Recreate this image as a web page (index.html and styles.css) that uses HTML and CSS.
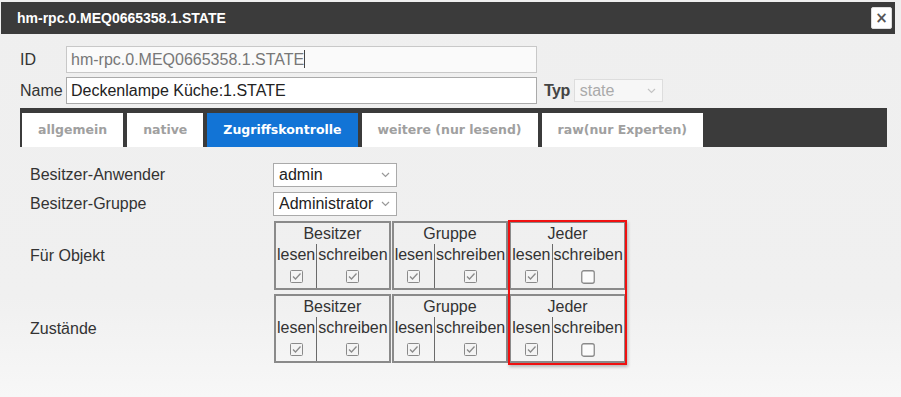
FILE: index.html
```html
<!DOCTYPE html>
<html lang="de">
<head>
    <meta charset="UTF-8">
    <meta name="viewport" content="width=device-width, initial-scale=1.0">
    <title>hm-rpc.0.MEQ0665358.1.STATE</title>
    <link rel="stylesheet" href="styles.css">
</head>
<body>
<div class="dialog">
    <div class="titlebar">
        <span class="title">hm-rpc.0.MEQ0665358.1.STATE</span>
        <button class="close">&times;</button>
    </div>

    <div class="body">
        <div class="field-row">
            <label class="field-label">ID</label>
            <div class="input readonly">hm-rpc.0.MEQ0665358.1.STATE<span class="caret"></span></div>
        </div>
        <div class="field-row">
            <label class="field-label">Name</label>
            <div class="input">Deckenlampe Küche:1.STATE</div>
            <label class="typ-label">Typ</label>
            <div class="select disabled typ">
                <span>state</span>
                <svg width="9" height="6" viewBox="0 0 9 6"><polyline points="1,1 4.5,4.5 8,1" fill="none" stroke="#c4c4c4" stroke-width="1.2"/></svg>
            </div>
        </div>

        <div class="tabs">
            <div class="tab">allgemein</div>
            <div class="tab">native</div>
            <div class="tab active">Zugriffskontrolle</div>
            <div class="tab">weitere (nur lesend)</div>
            <div class="tab">raw(nur Experten)</div>
        </div>

        <div class="settings">
            <div class="setting-row">
                <span class="setting-label">Besitzer-Anwender</span>
                <div class="select owner">
                    <span>admin</span>
                    <svg width="9" height="6" viewBox="0 0 9 6"><polyline points="1,1 4.5,4.5 8,1" fill="none" stroke="#999" stroke-width="1.2"/></svg>
                </div>
            </div>
            <div class="setting-row">
                <span class="setting-label">Besitzer-Gruppe</span>
                <div class="select owner">
                    <span>Administrator</span>
                    <svg width="9" height="6" viewBox="0 0 9 6"><polyline points="1,1 4.5,4.5 8,1" fill="none" stroke="#999" stroke-width="1.2"/></svg>
                </div>
            </div>

            <div class="perm" id="perm"></div>
        </div>
    </div>
</div>

<script>
    const rows = [
        { label: "Für Objekt", values: [true, true, true, true, true, false] },
        { label: "Zustände", values: [true, true, true, true, true, false] }
    ];
    const groups = ["Besitzer", "Gruppe", "Jeder"];

    const checked = '<svg width="13" height="13" viewBox="0 0 13 13"><rect x="0.5" y="0.5" width="12" height="12" rx="1" fill="#f4f4f4" stroke="#8a8a8a"/><polyline points="3,6.5 5.5,9 10.5,3.5" fill="none" stroke="#8a8a8a" stroke-width="1.3"/></svg>';
    const unchecked = '<svg width="14" height="14" viewBox="0 0 14 14"><rect x="0.75" y="0.75" width="12.5" height="12.5" rx="2" fill="#fbfbfb" stroke="#8a8a8a" stroke-width="1.3"/></svg>';

    function buildPerm() {
        const perm = document.getElementById("perm");
        let html = "";
        rows.forEach((row, r) => {
            html += `<div class="row-label" style="grid-row:${r + 1}">${row.label}</div>`;
            groups.forEach((group, g) => {
                const lesen = row.values[g * 2] ? checked : unchecked;
                const schreiben = row.values[g * 2 + 1] ? checked : unchecked;
                html += `<div class="group" style="grid-row:${r + 1};grid-column:${g + 2}">
                    <div class="group-head">${group}</div>
                    <div class="group-cols">
                        <div class="col lesen"><span>lesen</span>${lesen}</div>
                        <div class="col schreiben"><span>schreiben</span>${schreiben}</div>
                    </div>
                </div>`;
            });
        });
        html += '<div class="highlight"></div>';
        perm.innerHTML = html;
    }

    buildPerm();
</script>
</body>
</html>
```

FILE: styles.css
```css
body {
    margin: 0;
    font-family: "Liberation Sans", Arial, sans-serif;
    color: #333;
    background: linear-gradient(to bottom, #efefef 0%, #f0f0f0 75%, #f7f7f7 100%);
    height: 397px;
    overflow: hidden;
}

.dialog {
    padding-top: 2px;
}

.titlebar {
    display: flex;
    align-items: center;
    justify-content: space-between;
    height: 32px;
    margin: 0 6px 0 1px;
    padding: 0 3px 0 16px;
    background: #3b3b3b;
}

.title {
    color: #fff;
    font-weight: bold;
    font-size: 14px;
}

.close {
    width: 21px;
    height: 22px;
    padding: 0;
    border: 1px solid #ddd;
    border-radius: 2px;
    background: #fff;
    color: #555;
    font-family: "DejaVu Sans", sans-serif;
    font-size: 15px;
    font-weight: bold;
    line-height: 18px;
}

.body {
    padding: 12px 14px 0 20px;
}

.field-row {
    display: flex;
    align-items: center;
    margin-bottom: 4px;
    font-size: 16px;
}

.field-label {
    width: 46px;
}

.input {
    box-sizing: border-box;
    width: 471px;
    height: 27px;
    padding: 0 4px;
    border: 1px solid #aaa;
    background: #fff;
    line-height: 25px;
    color: #222;
}

.input.readonly {
    border-color: #c8c8c8;
    background: #fafafa;
    color: #777;
}

.caret {
    display: inline-block;
    width: 1px;
    height: 18px;
    background: #444;
    vertical-align: -3px;
}

.typ-label {
    margin: 0 4px 0 7px;
    font-weight: bold;
    color: #444;
    letter-spacing: -0.5px;
}

.select {
    box-sizing: border-box;
    display: flex;
    align-items: center;
    justify-content: space-between;
    height: 24px;
    padding: 0 6px 0 5px;
    border: 1px solid #aaa;
    background: #fff;
    font-size: 16px;
    color: #222;
}

.select.disabled {
    border-color: #ddd;
    background: #f7f7f7;
    color: #aaa;
}

.typ {
    width: 89px;
    height: 23px;
}

.tabs {
    display: flex;
    gap: 4px;
    height: 39px;
    margin-top: 2px;
    padding: 5px 2px 0;
    box-sizing: border-box;
    background: #3b3b3b;
}

.tab {
    padding: 0 16px;
    background: #fff;
    color: #a0a0a0;
    font-family: "DejaVu Sans", Verdana, sans-serif;
    font-size: 12.5px;
    font-weight: bold;
    line-height: 33px;
}

.tab.active {
    background: #1274d6;
    color: #fff;
}

.settings {
    padding: 16px 0 0 10px;
    font-size: 16px;
}

.setting-row {
    display: flex;
    align-items: center;
    margin-bottom: 5px;
}

.setting-label {
    width: 243px;
}

.owner {
    width: 124px;
}

.perm {
    display: grid;
    grid-template-columns: 243px auto auto auto;
    grid-template-rows: 69px 69px;
    justify-content: start;
    row-gap: 4px;
    column-gap: 1px;
}

.row-label {
    grid-column: 1;
    align-self: center;
}

.group {
    border: 2px solid #8a8a8a;
    text-align: center;
}

.group-head {
    line-height: 21px;
}

.group-cols {
    display: flex;
}

.col {
    display: flex;
    flex-direction: column;
    align-items: center;
    height: 44px;
}

.col span {
    line-height: 22px;
    padding: 0 1px;
}

.col svg {
    margin-top: 4px;
}

.schreiben {
    border-left: 1.5px solid #6a6a6a;
}

.highlight {
    grid-column: 4;
    grid-row: 1 / 3;
    margin: -1px -1px -2px -1px;
    border: 2px solid #f01010;
    box-shadow: 1px 2px 3px rgba(0, 0, 0, 0.25);
    pointer-events: none;
}
```
